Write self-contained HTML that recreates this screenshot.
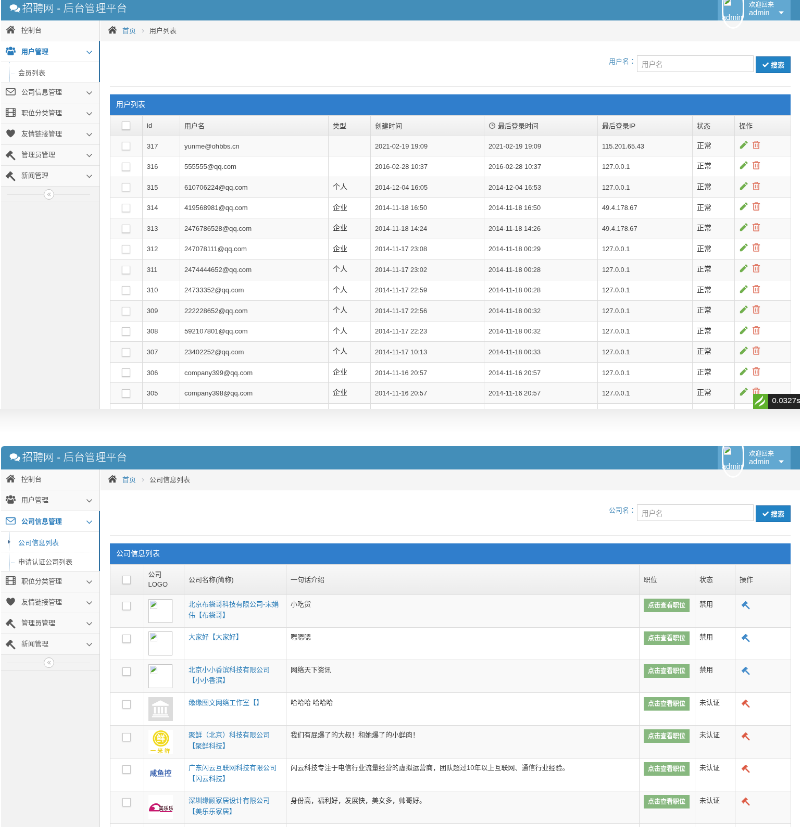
<!DOCTYPE html><html lang="zh-CN"><head><meta charset="utf-8"><title>招聘网 - 后台管理平台</title><style>*{box-sizing:border-box}
html,body{margin:0;padding:0}
body{width:800px;height:827px;overflow:hidden;background:#fff;position:relative;font-family:"Liberation Sans","Noto Sans CJK SC",sans-serif;color:#393939}
.screen{position:absolute;left:0;width:800px;overflow:hidden;background:#fff}
.app{position:absolute;left:1.2px;width:1534px;height:900px;transform:scale(.52083);transform-origin:0 0;background:#fff;font-size:13px;will-change:transform}
.ic{display:inline-block}
.navbar{height:45px;background:#438eb9;position:relative;color:#fff;z-index:5}
.brand{position:absolute;left:16px;top:0;line-height:44px;font-size:20.4px;font-weight:300;white-space:nowrap}
.user{position:absolute;left:1376px;top:0;width:140px;height:45px;background:#62a8d1}
.ava{position:absolute;left:8px;top:-20px;width:43px;height:81px;border:3px solid #fff;border-radius:50%/40%;display:block}
.ava .bimg{position:absolute;left:0;top:18px}
.ava .alt{position:absolute;left:-3px;top:47.5px;font-size:14.5px;color:#fff;line-height:16px;white-space:nowrap}
.bimg{display:block;width:16px;height:16px}
.uinfo{position:absolute;left:60px;top:7px;font-size:14.5px;line-height:15px;color:#fff}
.uinfo small{font-size:12px}
.sidebar{position:absolute;left:0;top:45px;width:190px;height:860px;background:#f2f2f2;border-right:1px solid #d6d6d6}
.nav,.sub{list-style:none;margin:0;padding:0}
.nav>li{border-bottom:1px solid #e5e5e5;background:#f9f9f9;position:relative}
.nav>li>a.it{display:block;height:39px;line-height:37.5px;padding-left:9px;overflow:hidden;color:#585858;font-size:13px;position:relative;white-space:nowrap}
.it .ic{vertical-align:-4px;margin-right:11px}
.arr{position:absolute;right:12px;top:1px;color:#666}
.arr .ic{margin:0;vertical-align:-3px}
.nav>li.open{background:#fff}
.nav>li.open>a.it{color:#2b7dbc;font-weight:bold;background:#fff;line-height:40px}.nav>li.open .arr{color:#2b7dbc}
.nav>li.open:after{content:"";position:absolute;right:-1px;top:0;bottom:0;border-right:2px solid #2b6ea0}
.sub{border-top:1px solid #e5e5e5;background:#fff;position:relative}
.sub:before{content:"";position:absolute;left:16px;top:0;bottom:0;border-left:1px dotted #b9d0e4}
.sub li a{display:block;height:36px;line-height:37px;padding-left:33px;overflow:hidden;color:#616161;font-size:13px;position:relative}
.sub li+li{border-top:1px dotted #d8d8d8}
.sub li a:before{content:"";position:absolute;left:20px;top:19px;width:7px;border-top:1px dotted #c5d9ea}
.sub li.cur a{color:#2b7dbc}
.sub li.cur a:before{border:0;top:16px;left:14px;border-left:5px solid #4a6f95;border-top:4px solid transparent;border-bottom:4px solid transparent;width:0}
.collapse{height:30px;background:#f3f3f3;border-bottom:1px solid #e0e0e0;text-align:center;position:relative}
.collapse:before{content:"";position:absolute;left:12px;right:18px;top:15px;border-top:1px solid #e0e0e0}
.cbtn{position:relative;left:-3px;display:inline-block;width:20px;height:20px;border:1px solid #bbb;border-radius:50%;background:#fff;margin-top:5px;line-height:18px}
.cbtn .ic{vertical-align:-2px}
.main{position:absolute;left:191px;top:45px;right:0}
.crumbs{height:40px;background:#f5f5f5;border-bottom:1px solid #e5e5e5;line-height:38px;padding-left:15px;font-size:13px;white-space:nowrap}
.crumbs .lk{color:#4c8fbd}
.crumbs .sep{color:#b2b6bf;margin:0 10px 0 11px;font-size:15px}
.crumbs .cur{color:#555}
.pc{position:absolute;left:18px;top:40px;width:1307px}
.search{height:85.5px;position:relative;font-size:13px}
.search .lb{position:absolute;right:297px;top:23px;line-height:32px;color:#4c8fbd;white-space:nowrap}.search .lb i{font-style:normal;font-family:"Liberation Sans","Noto Sans CJK JP",sans-serif}
.search .inp{position:absolute;right:71px;top:27px;width:224px;height:32px;border:1px solid #d5d5d5;line-height:33px;padding-left:8px;color:#999;font-size:13.5px}
.search .btn{position:absolute;right:0;top:29px;width:67px;font-weight:bold;height:32px;background:#2283c5;color:#fff;line-height:31px;text-align:center;font-size:13px;border:1px solid #1b6aaa}
.hr{border-top:1px solid #e3e3e3;margin-bottom:15.5px}
.thd{height:39.8px;line-height:39px;background:#307ecc;color:#fff;font-size:14px;padding-left:12px}
.tb{border-collapse:collapse;table-layout:fixed;width:1307px;font-size:13px;color:#393939}
.tb th,.tb td{border:1px solid #ddd;padding:0 8px;text-align:left;vertical-align:middle;overflow:hidden;white-space:nowrap}
.tb th{font-weight:normal;color:#484848;background:linear-gradient(#f8f8f8,#ececec);height:39px}
.tb thead tr{background:#f2f2f2}
.t1 td{height:39.55px;font-size:12.8px;color:#444}.zh{position:relative;top:-2.2px;font-size:14px;color:#333}
.tb tbody tr:nth-child(odd) td{background:#f9f9f9}
.tb .c{text-align:center;padding:0}
.cb{position:relative;top:0;left:-1px;display:inline-block;width:16px;height:16px;border:1px solid #c8c8c8;background:#fff;vertical-align:middle;box-shadow:0 1px 2px rgba(0,0,0,.18)}
.act .ic{vertical-align:middle;position:relative;top:-2.4px}
.t2 th{height:58px;line-height:19px}
.t2 td{height:62.8px;vertical-align:top;padding-top:8.5px;line-height:20.5px}
.t2 td.c{padding-top:11px}
.t2 td.nm{color:#2a7db8;white-space:normal;padding-right:0}
.lg{display:block;width:47px;height:46px;overflow:hidden;margin-top:-.8px}
.lg.brk{width:46px;border:1px solid #c6c6c6;border-right-color:#a8a8a8;border-bottom-color:#a8a8a8;background:#fff}
.lg.brk .bimg{margin:2px 1px}
.lg.bank{background:#dcdcdc;text-align:center;padding-top:4px}.lg.w{background:#fff}
.gbtn{display:inline-block;background:#87b87f;border:2px solid #87b87f;color:#fff;font-size:12px;font-weight:bold;line-height:22px;height:26px;padding:0 6px;margin-top:-1px}
.badge{position:absolute;left:752.5px;top:394.4px;width:48px;height:14.2px;background:#232323;overflow:hidden}
.badge .bl{position:absolute;left:0;top:0;width:15.5px;height:14.2px;background:#5fb02c;display:block}
.badge .bl svg{transform:scale(.52);transform-origin:0 0;display:block}
.badge .bt{position:absolute;left:19.3px;top:0;color:#fff;font-size:8px;line-height:14px;will-change:transform}

.fade{position:absolute;left:0;width:800px;height:24px;background:linear-gradient(rgba(0,0,0,.075),rgba(0,0,0,.03) 45%,rgba(0,0,0,0))}
.sub li:first-child a{height:37.8px;line-height:41.5px}
.sub li:first-child a:before{top:22px}
.sub li.cur:first-child a:before{top:14.5px;left:13px}
.t2 .act .ic{top:0;left:4px;margin-top:3px}
.s2{border-radius:4px 0 0 0}
.s2 .app{border-radius:6px 0 0 0;overflow:hidden}
.t1 td.em{font-size:13.1px}
</style></head><body><div class="screen s1" style="top:0px;height:408.6px"><div class="app" style="top:-3.5px"><div class="navbar"><div class="brand"><svg class="ic" width="21" height="21" viewBox="0 0 16 16" style="fill:#fff;vertical-align:-3px;margin-right:3.5px"><path d="M6.300 2C2.800 2 0 4 0 6.500c0 1.400.900 2.700 2.400 3.500-.200.800-.700 1.500-1.300 2.100 1.300-.100 2.600-.600 3.500-1.400.500.100 1.100.200 1.700.200 3.500 0 6.300-2 6.300-4.500S9.800 2 6.300 2zM13.700 7.300c-.300 2.600-3.200 4.700-7 4.800 1.100 1 2.700 1.600 4.500 1.600.600 0 1.200-.100 1.700-.200.900.800 2.200 1.300 3.500 1.400-.600-.600-1.100-1.300-1.300-2.100 1.500-.800 2.400-2 2.400-3.300 0-.900-.700-1.700-1.800-2.200z" transform="scale(0.900) translate(0.500,0.800)"/></svg>招聘网 - 后台管理平台</div><div class="user"><span class="ava"><svg class="bimg" width="16" height="16" viewBox="0 0 16 16"><path d="M1.500.500h9l4 4v11h-13z" fill="#fff" stroke="#cfcfcf"/><path d="M2.500 1.500h7.500l3.500 3.500v4h-11z" fill="#c3d2f3"/><path d="M2.500 12.500c1-4 5-7 10-7.500-1 4-5 7.500-10 7.500z" fill="#54a32c"/><path d="M10.500.500v4h4" fill="#e8e8e8" stroke="#cfcfcf"/></svg><span class="alt">admin</span></span><span class="uinfo"><small>欢迎回来</small><br>admin</span><svg class="ic" width="16" height="16" viewBox="0 0 16 16" style="fill:#fff;position:absolute;right:10px;top:22px"><path d="M3 5.500h10L8 11z"/></svg></div></div><div class="sidebar"><ul class="nav"><li class=""><a class="it"><svg class="ic" width="19" height="19" viewBox="0 0 16 16" style="fill:currentColor;"><path d="M8 1.6 0.6 8.2l1 1.1L8 3.8l6.4 5.5 1-1.1L12.8 5.8V2.4h-1.9v1.7zM8 5 2.7 9.5V14.4h3.9v-3.6h2.8v3.6h3.9V9.5z"/></svg><span class="t">控制台</span></a></li><li class="open"><a class="it"><svg class="ic" width="19" height="19" viewBox="0 0 16 16" style="fill:currentColor;"><path d="M8 1.300a2.700 2.700 0 1 0 0 5.400 2.700 2.700 0 0 0 0-5.400zM2.900 2.600a2.100 2.100 0 1 0 0 4.200 2.100 2.100 0 0 0 0-4.200zM13.100 2.600a2.100 2.100 0 1 0 0 4.200 2.100 2.100 0 0 0 0-4.200zM4.700 15c-1.200 0-1.900-.700-1.900-1.900 0-2.900.600-5.600 2.500-5.600.500.500 1.500 1.100 2.700 1.100s2.200-.600 2.700-1.100c1.900 0 2.500 2.700 2.500 5.600 0 1.200-.700 1.900-1.900 1.900zM0 9.800c0-1.700.300-3.100 1.400-3.100.500.400 1.200.700 1.900.700-.700.900-1 2-1.100 3.300H1C.4 10.700 0 10.400 0 9.800zM16 9.800c0-1.700-.300-3.100-1.400-3.100-.500.400-1.200.700-1.900.700.700.900 1 2 1.100 3.300H15c.600 0 1-.300 1-.900z"/></svg><span class="t">用户管理</span><b class="arr"><svg class="ic" width="15" height="15" viewBox="0 0 16 16" style="fill:currentColor;"><path d="M3.200 5.400l4.800 4.800 4.800-4.800 1 1L8 12.200 2.200 6.400z"/></svg></b></a><ul class="sub"><li><a>会员列表</a></li></ul></li><li class=""><a class="it"><svg class="ic" width="19" height="19" viewBox="0 0 16 16" style="fill:currentColor;"><path d="M1.5 2.500h13c.800 0 1.500.700 1.500 1.500v8.500c0 .800-.700 1.500-1.500 1.500h-13C.7 14 0 13.300 0 12.500V4c0-.800.700-1.500 1.500-1.500zM1.200 5.300v7.200c0 .200.100.300.300.300h13c.200 0 .300-.100.300-.300V5.300L9.200 9.900c-.700.600-1.700.600-2.400 0zM1.200 3.900l6.400 5.100c.200.200.600.200.800 0l6.400-5.100c0-.100-.100-.200-.300-.200h-13c-.200 0-.300.100-.300.200z"/></svg><span class="t">公司信息管理</span><b class="arr"><svg class="ic" width="15" height="15" viewBox="0 0 16 16" style="fill:currentColor;"><path d="M3.200 5.400l4.800 4.800 4.800-4.800 1 1L8 12.200 2.200 6.400z"/></svg></b></a></li><li class=""><a class="it"><svg class="ic" width="19" height="19" viewBox="0 0 16 16" style="fill:currentColor;"><path fill-rule="evenodd" d="M1.400.800h13.200c.800 0 1.400.600 1.400 1.400v11.600c0 .800-.600 1.400-1.400 1.400H1.400C.600 15.200 0 14.600 0 13.800V2.200C0 1.400.600.800 1.400.800zM1.200 2.100v2h1.900v-2zM1.200 5.400v2h1.900v-2zM1.200 8.700v2h1.900v-2zM1.200 12v1.900h1.900V12zM12.900 2.100v2h1.900v-2zM12.900 5.400v2h1.900v-2zM12.900 8.700v2h1.900v-2zM12.900 12v1.900h1.900V12zM4.500 2.100v5.200h7V2.100zM4.500 8.700v5.200h7V8.700z"/></svg><span class="t">职位分类管理</span><b class="arr"><svg class="ic" width="15" height="15" viewBox="0 0 16 16" style="fill:currentColor;"><path d="M3.200 5.400l4.800 4.800 4.800-4.800 1 1L8 12.200 2.200 6.400z"/></svg></b></a></li><li class=""><a class="it"><svg class="ic" width="19" height="19" viewBox="0 0 16 16" style="fill:currentColor;"><path d="M8 14.600C7.700 14.600 1 10.100 1 5.800 1 3.500 2.600 2 4.600 2 6.100 2 7.300 2.900 8 4c.700-1.100 1.900-2 3.400-2C13.400 2 15 3.500 15 5.800c0 4.300-6.700 8.800-7 8.800z"/></svg><span class="t">友情链接管理</span><b class="arr"><svg class="ic" width="15" height="15" viewBox="0 0 16 16" style="fill:currentColor;"><path d="M3.200 5.400l4.800 4.800 4.800-4.800 1 1L8 12.200 2.200 6.400z"/></svg></b></a></li><li class=""><a class="it"><svg class="ic" width="19" height="19" viewBox="0 0 16 16" style="fill:currentColor;position:relative;top:3px"><g transform="translate(5.600 5.400) rotate(45)"><rect x="-2.600" y="-4.300" width="5.200" height="8.600"/><rect x="-3.300" y="-5.700" width="6.600" height="1.700" rx=".5"/><rect x="-3.300" y="4" width="6.600" height="1.700" rx=".5"/><rect x="2.600" y="-1.300" width="10.800" height="2.600" rx="1"/></g></svg><span class="t">管理员管理</span><b class="arr"><svg class="ic" width="15" height="15" viewBox="0 0 16 16" style="fill:currentColor;"><path d="M3.200 5.400l4.800 4.800 4.800-4.800 1 1L8 12.200 2.200 6.400z"/></svg></b></a></li><li class=""><a class="it"><svg class="ic" width="19" height="19" viewBox="0 0 16 16" style="fill:currentColor;position:relative;top:3px"><g transform="translate(5.600 5.400) rotate(45)"><rect x="-2.600" y="-4.300" width="5.200" height="8.600"/><rect x="-3.300" y="-5.700" width="6.600" height="1.700" rx=".5"/><rect x="-3.300" y="4" width="6.600" height="1.700" rx=".5"/><rect x="2.600" y="-1.300" width="10.800" height="2.600" rx="1"/></g></svg><span class="t">新闻管理</span><b class="arr"><svg class="ic" width="15" height="15" viewBox="0 0 16 16" style="fill:currentColor;"><path d="M3.200 5.400l4.800 4.800 4.800-4.800 1 1L8 12.200 2.200 6.400z"/></svg></b></a></li></ul><div class="collapse"><span class="cbtn"><svg class="ic" width="12" height="12" viewBox="0 0 16 16" style="fill:#aaa;"><path d="M8.200 3.200 3.600 8l4.600 4.800.900-.900L5.400 8l3.700-3.900zM12.200 3.200 7.600 8l4.600 4.800.900-.900L9.400 8l3.700-3.900z"/></svg></span></div></div><div class="main"><div class="crumbs"><svg class="ic" width="18" height="18" viewBox="0 0 16 16" style="fill:#4a4a4a;vertical-align:-3px;margin-right:10px;margin-left:-1px"><path d="M8 1.6 0.6 8.2l1 1.1L8 3.8l6.4 5.5 1-1.1L12.8 5.8V2.4h-1.9v1.7zM8 5 2.7 9.5V14.4h3.9v-3.6h2.8v3.6h3.9V9.5z"/></svg><span class="lk">首页</span><span class="sep">›</span><span class="cur">用户列表</span></div><div class="pc"><div class="search"><span class="lb">用户名<i lang="ja">：</i></span><span class="inp">用户名</span><span class="btn"><svg class="ic" width="14" height="14" viewBox="0 0 16 16" style="fill:#fff;vertical-align:-2px;margin-right:3px"><path d="M6.200 13.600.9 8.300l2-2 3.300 3.300 6.900-6.900 2 2z"/></svg>搜索</span></div><div class="hr"></div><div class="thd">用户列表</div><table class="tb t1"><colgroup><col style="width:62px"><col style="width:72px"><col style="width:285px"><col style="width:81px"><col style="width:218px"><col style="width:218px"><col style="width:182px"><col style="width:81px"><col style="width:108px"></colgroup><thead><tr><th class="c"><span class="cb"></span></th><th>id</th><th>用户名</th><th>类型</th><th>创建时间</th><th><svg class="ic" width="14" height="14" viewBox="0 0 16 16" style="fill:#707070;vertical-align:-2px;margin-right:4px"><path fill-rule="evenodd" d="M8 1a7 7 0 1 0 0 14A7 7 0 0 0 8 1zm0 1.700a5.300 5.300 0 1 1 0 10.600A5.300 5.300 0 0 1 8 2.700zM7.200 4.200h1.500v3.500h2.600v1.500H7.200z"/></svg>最后登录时间</th><th>最后登录IP</th><th>状态</th><th>操作</th></tr></thead><tbody><tr><td class="c"><span class="cb"></span></td><td>317</td><td class="em">yunme@ohbbs.cn</td><td><span class="zh"></span></td><td>2021-02-19 19:09</td><td>2021-02-19 19:09</td><td>115.201.65.43</td><td><span class="zh">正常</span></td><td class="act"><svg class="ic" width="18" height="18" viewBox="0 0 16 16" style="fill:#72b04e;"><path d="M11.800.9l3.300 3.300-1.900 1.900-3.300-3.300zM9 3.700l3.300 3.300-7.400 7.400H1.600v-3.300z"/></svg><svg class="ic" width="18" height="18" viewBox="0 0 16 16" style="fill:#e27d6a;margin-left:6px"><path fill-rule="evenodd" d="M5.600 1h4.800l.800 1.700h3.100v1.500h-1.100v9.400c0 .800-.600 1.400-1.400 1.400H4.200c-.800 0-1.400-.600-1.400-1.400V4.200H1.700V2.700h3.100zM6.400 2.200l-.300.500h3.800l-.300-.500zM4.300 4.200v9.100c0 .100.100.200.200.200h7c.100 0 .200-.100.200-.200V4.200zM5.800 6h1.300v5.800H5.800zM8.900 6h1.300v5.800H8.900z"/></svg></td></tr><tr><td class="c"><span class="cb"></span></td><td>316</td><td class="em">555555@qq.com</td><td><span class="zh"></span></td><td>2016-02-28 10:37</td><td>2016-02-28 10:37</td><td>127.0.0.1</td><td><span class="zh">正常</span></td><td class="act"><svg class="ic" width="18" height="18" viewBox="0 0 16 16" style="fill:#72b04e;"><path d="M11.800.9l3.300 3.300-1.900 1.900-3.300-3.300zM9 3.700l3.300 3.300-7.400 7.400H1.600v-3.300z"/></svg><svg class="ic" width="18" height="18" viewBox="0 0 16 16" style="fill:#e27d6a;margin-left:6px"><path fill-rule="evenodd" d="M5.600 1h4.800l.800 1.700h3.100v1.500h-1.100v9.400c0 .800-.600 1.400-1.400 1.400H4.200c-.800 0-1.400-.600-1.400-1.400V4.200H1.700V2.700h3.100zM6.400 2.200l-.300.500h3.800l-.300-.500zM4.300 4.200v9.100c0 .100.100.200.200.200h7c.100 0 .200-.100.200-.200V4.200zM5.800 6h1.300v5.800H5.800zM8.900 6h1.300v5.800H8.900z"/></svg></td></tr><tr><td class="c"><span class="cb"></span></td><td>315</td><td class="em">610706224@qq.com</td><td><span class="zh">个人</span></td><td>2014-12-04 16:05</td><td>2014-12-04 16:53</td><td>127.0.0.1</td><td><span class="zh">正常</span></td><td class="act"><svg class="ic" width="18" height="18" viewBox="0 0 16 16" style="fill:#72b04e;"><path d="M11.800.9l3.300 3.300-1.900 1.900-3.300-3.300zM9 3.700l3.300 3.300-7.400 7.400H1.600v-3.300z"/></svg><svg class="ic" width="18" height="18" viewBox="0 0 16 16" style="fill:#e27d6a;margin-left:6px"><path fill-rule="evenodd" d="M5.600 1h4.800l.800 1.700h3.100v1.500h-1.100v9.400c0 .800-.600 1.400-1.400 1.400H4.200c-.800 0-1.400-.600-1.400-1.400V4.200H1.700V2.700h3.100zM6.400 2.200l-.300.500h3.800l-.300-.500zM4.300 4.200v9.100c0 .100.100.200.200.200h7c.100 0 .200-.100.200-.200V4.200zM5.800 6h1.300v5.800H5.800zM8.900 6h1.300v5.800H8.900z"/></svg></td></tr><tr><td class="c"><span class="cb"></span></td><td>314</td><td class="em">419568981@qq.com</td><td><span class="zh">企业</span></td><td>2014-11-18 16:50</td><td>2014-11-18 16:50</td><td>49.4.178.67</td><td><span class="zh">正常</span></td><td class="act"><svg class="ic" width="18" height="18" viewBox="0 0 16 16" style="fill:#72b04e;"><path d="M11.800.9l3.300 3.300-1.900 1.900-3.300-3.300zM9 3.700l3.300 3.300-7.400 7.400H1.600v-3.300z"/></svg><svg class="ic" width="18" height="18" viewBox="0 0 16 16" style="fill:#e27d6a;margin-left:6px"><path fill-rule="evenodd" d="M5.600 1h4.800l.800 1.700h3.100v1.500h-1.100v9.400c0 .800-.600 1.400-1.400 1.400H4.200c-.800 0-1.400-.600-1.400-1.400V4.200H1.700V2.700h3.100zM6.400 2.200l-.300.500h3.800l-.300-.500zM4.300 4.200v9.100c0 .100.100.200.200.200h7c.100 0 .200-.100.200-.200V4.200zM5.800 6h1.300v5.800H5.800zM8.900 6h1.300v5.800H8.900z"/></svg></td></tr><tr><td class="c"><span class="cb"></span></td><td>313</td><td class="em">2476786528@qq.com</td><td><span class="zh">企业</span></td><td>2014-11-18 14:24</td><td>2014-11-18 14:26</td><td>49.4.178.67</td><td><span class="zh">正常</span></td><td class="act"><svg class="ic" width="18" height="18" viewBox="0 0 16 16" style="fill:#72b04e;"><path d="M11.800.9l3.300 3.300-1.900 1.900-3.300-3.300zM9 3.700l3.300 3.300-7.400 7.400H1.600v-3.300z"/></svg><svg class="ic" width="18" height="18" viewBox="0 0 16 16" style="fill:#e27d6a;margin-left:6px"><path fill-rule="evenodd" d="M5.600 1h4.800l.800 1.700h3.100v1.500h-1.100v9.400c0 .800-.600 1.400-1.400 1.400H4.200c-.800 0-1.400-.600-1.400-1.400V4.200H1.700V2.700h3.100zM6.400 2.200l-.300.500h3.800l-.300-.500zM4.300 4.200v9.100c0 .100.100.200.200.200h7c.100 0 .200-.100.200-.200V4.200zM5.800 6h1.300v5.800H5.800zM8.900 6h1.300v5.800H8.900z"/></svg></td></tr><tr><td class="c"><span class="cb"></span></td><td>312</td><td class="em">247078111@qq.com</td><td><span class="zh">企业</span></td><td>2014-11-17 23:08</td><td>2014-11-18 00:29</td><td>127.0.0.1</td><td><span class="zh">正常</span></td><td class="act"><svg class="ic" width="18" height="18" viewBox="0 0 16 16" style="fill:#72b04e;"><path d="M11.800.9l3.300 3.300-1.900 1.900-3.300-3.300zM9 3.700l3.300 3.300-7.400 7.400H1.600v-3.300z"/></svg><svg class="ic" width="18" height="18" viewBox="0 0 16 16" style="fill:#e27d6a;margin-left:6px"><path fill-rule="evenodd" d="M5.600 1h4.800l.800 1.700h3.100v1.500h-1.100v9.400c0 .800-.600 1.400-1.400 1.400H4.200c-.800 0-1.400-.600-1.400-1.400V4.200H1.700V2.700h3.100zM6.400 2.200l-.300.500h3.800l-.300-.500zM4.300 4.200v9.100c0 .100.100.200.200.200h7c.100 0 .200-.100.200-.200V4.200zM5.800 6h1.300v5.800H5.800zM8.900 6h1.300v5.800H8.900z"/></svg></td></tr><tr><td class="c"><span class="cb"></span></td><td>311</td><td class="em">2474444652@qq.com</td><td><span class="zh">个人</span></td><td>2014-11-17 23:02</td><td>2014-11-18 00:28</td><td>127.0.0.1</td><td><span class="zh">正常</span></td><td class="act"><svg class="ic" width="18" height="18" viewBox="0 0 16 16" style="fill:#72b04e;"><path d="M11.800.9l3.300 3.300-1.900 1.900-3.300-3.300zM9 3.700l3.300 3.300-7.400 7.400H1.600v-3.300z"/></svg><svg class="ic" width="18" height="18" viewBox="0 0 16 16" style="fill:#e27d6a;margin-left:6px"><path fill-rule="evenodd" d="M5.600 1h4.800l.800 1.700h3.100v1.500h-1.100v9.400c0 .800-.600 1.400-1.400 1.400H4.200c-.800 0-1.400-.600-1.400-1.400V4.200H1.700V2.700h3.100zM6.400 2.200l-.300.500h3.800l-.300-.500zM4.300 4.200v9.100c0 .100.100.200.200.200h7c.100 0 .200-.100.200-.200V4.200zM5.800 6h1.300v5.800H5.800zM8.900 6h1.300v5.800H8.900z"/></svg></td></tr><tr><td class="c"><span class="cb"></span></td><td>310</td><td class="em">24733352@qq.com</td><td><span class="zh">个人</span></td><td>2014-11-17 22:59</td><td>2014-11-18 00:28</td><td>127.0.0.1</td><td><span class="zh">正常</span></td><td class="act"><svg class="ic" width="18" height="18" viewBox="0 0 16 16" style="fill:#72b04e;"><path d="M11.800.9l3.300 3.300-1.900 1.900-3.300-3.300zM9 3.700l3.300 3.300-7.400 7.400H1.600v-3.300z"/></svg><svg class="ic" width="18" height="18" viewBox="0 0 16 16" style="fill:#e27d6a;margin-left:6px"><path fill-rule="evenodd" d="M5.600 1h4.800l.800 1.700h3.100v1.500h-1.100v9.400c0 .800-.600 1.400-1.400 1.400H4.200c-.800 0-1.400-.600-1.400-1.400V4.200H1.700V2.700h3.100zM6.400 2.200l-.300.500h3.800l-.300-.500zM4.300 4.200v9.100c0 .100.100.200.200.200h7c.100 0 .200-.100.200-.200V4.200zM5.800 6h1.300v5.800H5.800zM8.900 6h1.300v5.800H8.900z"/></svg></td></tr><tr><td class="c"><span class="cb"></span></td><td>309</td><td class="em">222228652@qq.com</td><td><span class="zh">个人</span></td><td>2014-11-17 22:56</td><td>2014-11-18 00:32</td><td>127.0.0.1</td><td><span class="zh">正常</span></td><td class="act"><svg class="ic" width="18" height="18" viewBox="0 0 16 16" style="fill:#72b04e;"><path d="M11.800.9l3.300 3.300-1.900 1.900-3.300-3.300zM9 3.700l3.300 3.300-7.400 7.400H1.600v-3.300z"/></svg><svg class="ic" width="18" height="18" viewBox="0 0 16 16" style="fill:#e27d6a;margin-left:6px"><path fill-rule="evenodd" d="M5.600 1h4.800l.800 1.700h3.100v1.500h-1.100v9.400c0 .800-.600 1.400-1.400 1.400H4.200c-.800 0-1.400-.600-1.400-1.400V4.200H1.700V2.700h3.100zM6.400 2.200l-.300.500h3.800l-.300-.500zM4.300 4.200v9.100c0 .100.100.200.200.200h7c.100 0 .200-.100.200-.200V4.200zM5.800 6h1.300v5.800H5.800zM8.900 6h1.300v5.800H8.900z"/></svg></td></tr><tr><td class="c"><span class="cb"></span></td><td>308</td><td class="em">592107801@qq.com</td><td><span class="zh">个人</span></td><td>2014-11-17 22:23</td><td>2014-11-18 00:32</td><td>127.0.0.1</td><td><span class="zh">正常</span></td><td class="act"><svg class="ic" width="18" height="18" viewBox="0 0 16 16" style="fill:#72b04e;"><path d="M11.800.9l3.300 3.300-1.900 1.900-3.300-3.300zM9 3.700l3.300 3.300-7.400 7.400H1.600v-3.300z"/></svg><svg class="ic" width="18" height="18" viewBox="0 0 16 16" style="fill:#e27d6a;margin-left:6px"><path fill-rule="evenodd" d="M5.600 1h4.800l.800 1.700h3.100v1.500h-1.100v9.400c0 .800-.600 1.400-1.400 1.400H4.200c-.800 0-1.400-.600-1.400-1.400V4.200H1.700V2.700h3.100zM6.400 2.200l-.300.500h3.800l-.300-.500zM4.300 4.200v9.100c0 .100.100.200.200.200h7c.100 0 .200-.100.200-.200V4.200zM5.800 6h1.300v5.800H5.800zM8.900 6h1.300v5.800H8.900z"/></svg></td></tr><tr><td class="c"><span class="cb"></span></td><td>307</td><td class="em">23402252@qq.com</td><td><span class="zh">个人</span></td><td>2014-11-17 10:13</td><td>2014-11-18 00:33</td><td>127.0.0.1</td><td><span class="zh">正常</span></td><td class="act"><svg class="ic" width="18" height="18" viewBox="0 0 16 16" style="fill:#72b04e;"><path d="M11.800.9l3.300 3.300-1.900 1.900-3.300-3.300zM9 3.700l3.300 3.300-7.400 7.400H1.600v-3.300z"/></svg><svg class="ic" width="18" height="18" viewBox="0 0 16 16" style="fill:#e27d6a;margin-left:6px"><path fill-rule="evenodd" d="M5.600 1h4.800l.800 1.700h3.100v1.500h-1.100v9.400c0 .800-.600 1.400-1.400 1.400H4.200c-.800 0-1.400-.600-1.400-1.400V4.200H1.700V2.700h3.100zM6.400 2.200l-.300.500h3.800l-.300-.500zM4.300 4.200v9.100c0 .100.100.200.200.200h7c.100 0 .200-.100.200-.200V4.200zM5.800 6h1.300v5.800H5.800zM8.900 6h1.300v5.800H8.900z"/></svg></td></tr><tr><td class="c"><span class="cb"></span></td><td>306</td><td class="em">company399@qq.com</td><td><span class="zh">企业</span></td><td>2014-11-16 20:57</td><td>2014-11-16 20:57</td><td>127.0.0.1</td><td><span class="zh">正常</span></td><td class="act"><svg class="ic" width="18" height="18" viewBox="0 0 16 16" style="fill:#72b04e;"><path d="M11.800.9l3.300 3.300-1.900 1.900-3.300-3.300zM9 3.700l3.300 3.300-7.400 7.400H1.600v-3.300z"/></svg><svg class="ic" width="18" height="18" viewBox="0 0 16 16" style="fill:#e27d6a;margin-left:6px"><path fill-rule="evenodd" d="M5.600 1h4.800l.800 1.700h3.100v1.500h-1.100v9.400c0 .800-.600 1.400-1.400 1.400H4.200c-.800 0-1.400-.600-1.400-1.400V4.200H1.700V2.700h3.100zM6.400 2.200l-.300.500h3.800l-.300-.500zM4.300 4.200v9.100c0 .100.100.200.200.200h7c.100 0 .200-.100.200-.200V4.200zM5.800 6h1.300v5.800H5.800zM8.900 6h1.300v5.800H8.900z"/></svg></td></tr><tr><td class="c"><span class="cb"></span></td><td>305</td><td class="em">company398@qq.com</td><td><span class="zh">企业</span></td><td>2014-11-16 20:57</td><td>2014-11-16 20:57</td><td>127.0.0.1</td><td><span class="zh">正常</span></td><td class="act"><svg class="ic" width="18" height="18" viewBox="0 0 16 16" style="fill:#72b04e;"><path d="M11.800.9l3.300 3.300-1.900 1.900-3.300-3.300zM9 3.700l3.300 3.300-7.400 7.400H1.600v-3.300z"/></svg><svg class="ic" width="18" height="18" viewBox="0 0 16 16" style="fill:#e27d6a;margin-left:6px"><path fill-rule="evenodd" d="M5.600 1h4.800l.800 1.700h3.100v1.500h-1.100v9.400c0 .800-.600 1.400-1.400 1.400H4.200c-.800 0-1.400-.600-1.400-1.400V4.200H1.700V2.700h3.100zM6.400 2.200l-.300.500h3.800l-.300-.500zM4.300 4.200v9.100c0 .100.100.200.200.200h7c.100 0 .200-.100.200-.200V4.200zM5.800 6h1.300v5.800H5.800zM8.900 6h1.300v5.800H8.900z"/></svg></td></tr><tr><td></td><td></td><td></td><td></td><td></td><td></td><td></td><td></td><td></td></tr></tbody></table></div></div></div><div class="badge"><span class="bl"><svg width="30" height="27" viewBox="0 0 30 27"><path d="M3 22C5 13 14 12 19 3c1 6-3 10-8 13-4 2-6 4-8 6zM11 24c2-6 9-7 12-14 1 5-2 9-6 11-3 1-4 2-6 3z" fill="#fff"/></svg></span><span class="bt">0.0327s</span></div></div><div class="fade" style="top:408.8px"></div><div class="screen s2" style="top:446.4px;height:380.6px"><div class="app" style="top:0px"><div class="navbar"><div class="brand"><svg class="ic" width="21" height="21" viewBox="0 0 16 16" style="fill:#fff;vertical-align:-3px;margin-right:3.5px"><path d="M6.300 2C2.800 2 0 4 0 6.500c0 1.400.900 2.700 2.400 3.500-.200.800-.700 1.500-1.300 2.100 1.300-.100 2.600-.600 3.500-1.400.500.100 1.100.200 1.700.200 3.500 0 6.300-2 6.300-4.500S9.800 2 6.300 2zM13.700 7.300c-.300 2.600-3.200 4.700-7 4.800 1.100 1 2.700 1.600 4.500 1.600.600 0 1.200-.100 1.700-.200.900.800 2.200 1.300 3.500 1.400-.600-.600-1.100-1.300-1.300-2.100 1.500-.800 2.400-2 2.400-3.300 0-.900-.700-1.700-1.800-2.200z" transform="scale(0.900) translate(0.500,0.800)"/></svg>招聘网 - 后台管理平台</div><div class="user"><span class="ava"><svg class="bimg" width="16" height="16" viewBox="0 0 16 16"><path d="M1.500.500h9l4 4v11h-13z" fill="#fff" stroke="#cfcfcf"/><path d="M2.500 1.500h7.500l3.500 3.500v4h-11z" fill="#c3d2f3"/><path d="M2.500 12.500c1-4 5-7 10-7.500-1 4-5 7.500-10 7.500z" fill="#54a32c"/><path d="M10.500.500v4h4" fill="#e8e8e8" stroke="#cfcfcf"/></svg><span class="alt">admin</span></span><span class="uinfo"><small>欢迎回来</small><br>admin</span><svg class="ic" width="16" height="16" viewBox="0 0 16 16" style="fill:#fff;position:absolute;right:10px;top:22px"><path d="M3 5.500h10L8 11z"/></svg></div></div><div class="sidebar"><ul class="nav"><li class=""><a class="it"><svg class="ic" width="19" height="19" viewBox="0 0 16 16" style="fill:currentColor;"><path d="M8 1.6 0.6 8.2l1 1.1L8 3.8l6.4 5.5 1-1.1L12.8 5.8V2.4h-1.9v1.7zM8 5 2.7 9.5V14.4h3.9v-3.6h2.8v3.6h3.9V9.5z"/></svg><span class="t">控制台</span></a></li><li class=""><a class="it"><svg class="ic" width="19" height="19" viewBox="0 0 16 16" style="fill:currentColor;"><path d="M8 1.300a2.700 2.700 0 1 0 0 5.400 2.700 2.700 0 0 0 0-5.400zM2.900 2.600a2.100 2.100 0 1 0 0 4.200 2.100 2.100 0 0 0 0-4.200zM13.100 2.600a2.100 2.100 0 1 0 0 4.200 2.100 2.100 0 0 0 0-4.200zM4.700 15c-1.200 0-1.900-.700-1.900-1.900 0-2.900.600-5.600 2.500-5.600.500.500 1.500 1.100 2.700 1.100s2.200-.600 2.700-1.100c1.900 0 2.500 2.700 2.500 5.600 0 1.200-.700 1.900-1.900 1.900zM0 9.800c0-1.700.300-3.100 1.400-3.100.500.400 1.200.700 1.900.700-.700.900-1 2-1.100 3.300H1C.4 10.700 0 10.400 0 9.800zM16 9.800c0-1.700-.300-3.100-1.400-3.100-.500.400-1.200.700-1.900.700.700.900 1 2 1.100 3.300H15c.600 0 1-.300 1-.900z"/></svg><span class="t">用户管理</span><b class="arr"><svg class="ic" width="15" height="15" viewBox="0 0 16 16" style="fill:currentColor;"><path d="M3.200 5.400l4.800 4.800 4.800-4.800 1 1L8 12.200 2.200 6.400z"/></svg></b></a></li><li class="open"><a class="it"><svg class="ic" width="19" height="19" viewBox="0 0 16 16" style="fill:currentColor;"><path d="M1.5 2.500h13c.800 0 1.500.700 1.500 1.500v8.500c0 .800-.700 1.500-1.500 1.500h-13C.7 14 0 13.300 0 12.500V4c0-.800.700-1.500 1.500-1.500zM1.200 5.300v7.200c0 .200.100.300.300.300h13c.200 0 .300-.100.300-.300V5.300L9.200 9.900c-.700.600-1.700.600-2.400 0zM1.200 3.900l6.400 5.100c.200.200.600.200.800 0l6.400-5.100c0-.100-.100-.200-.300-.200h-13c-.200 0-.300.100-.300.200z"/></svg><span class="t">公司信息管理</span><b class="arr"><svg class="ic" width="15" height="15" viewBox="0 0 16 16" style="fill:currentColor;"><path d="M3.200 5.400l4.800 4.800 4.800-4.800 1 1L8 12.200 2.200 6.400z"/></svg></b></a><ul class="sub"><li class="cur"><a>公司信息列表</a></li><li><a>申请认证公司列表</a></li></ul></li><li class=""><a class="it"><svg class="ic" width="19" height="19" viewBox="0 0 16 16" style="fill:currentColor;"><path fill-rule="evenodd" d="M1.400.800h13.200c.800 0 1.400.600 1.400 1.400v11.600c0 .800-.600 1.400-1.400 1.400H1.400C.600 15.200 0 14.600 0 13.800V2.200C0 1.400.600.800 1.400.800zM1.200 2.100v2h1.900v-2zM1.200 5.400v2h1.900v-2zM1.200 8.700v2h1.900v-2zM1.200 12v1.900h1.900V12zM12.900 2.100v2h1.900v-2zM12.900 5.400v2h1.900v-2zM12.900 8.700v2h1.900v-2zM12.900 12v1.900h1.900V12zM4.500 2.100v5.200h7V2.100zM4.500 8.700v5.200h7V8.700z"/></svg><span class="t">职位分类管理</span><b class="arr"><svg class="ic" width="15" height="15" viewBox="0 0 16 16" style="fill:currentColor;"><path d="M3.200 5.400l4.800 4.800 4.800-4.800 1 1L8 12.200 2.200 6.400z"/></svg></b></a></li><li class=""><a class="it"><svg class="ic" width="19" height="19" viewBox="0 0 16 16" style="fill:currentColor;"><path d="M8 14.600C7.700 14.600 1 10.100 1 5.800 1 3.500 2.600 2 4.600 2 6.100 2 7.300 2.900 8 4c.700-1.100 1.900-2 3.400-2C13.400 2 15 3.500 15 5.800c0 4.300-6.700 8.800-7 8.800z"/></svg><span class="t">友情链接管理</span><b class="arr"><svg class="ic" width="15" height="15" viewBox="0 0 16 16" style="fill:currentColor;"><path d="M3.200 5.400l4.800 4.800 4.800-4.800 1 1L8 12.200 2.200 6.400z"/></svg></b></a></li><li class=""><a class="it"><svg class="ic" width="19" height="19" viewBox="0 0 16 16" style="fill:currentColor;position:relative;top:3px"><g transform="translate(5.600 5.400) rotate(45)"><rect x="-2.600" y="-4.300" width="5.200" height="8.600"/><rect x="-3.300" y="-5.700" width="6.600" height="1.700" rx=".5"/><rect x="-3.300" y="4" width="6.600" height="1.700" rx=".5"/><rect x="2.600" y="-1.300" width="10.800" height="2.600" rx="1"/></g></svg><span class="t">管理员管理</span><b class="arr"><svg class="ic" width="15" height="15" viewBox="0 0 16 16" style="fill:currentColor;"><path d="M3.200 5.400l4.800 4.800 4.800-4.800 1 1L8 12.200 2.200 6.400z"/></svg></b></a></li><li class=""><a class="it"><svg class="ic" width="19" height="19" viewBox="0 0 16 16" style="fill:currentColor;position:relative;top:3px"><g transform="translate(5.600 5.400) rotate(45)"><rect x="-2.600" y="-4.300" width="5.200" height="8.600"/><rect x="-3.300" y="-5.700" width="6.600" height="1.700" rx=".5"/><rect x="-3.300" y="4" width="6.600" height="1.700" rx=".5"/><rect x="2.600" y="-1.300" width="10.800" height="2.600" rx="1"/></g></svg><span class="t">新闻管理</span><b class="arr"><svg class="ic" width="15" height="15" viewBox="0 0 16 16" style="fill:currentColor;"><path d="M3.200 5.400l4.800 4.800 4.800-4.800 1 1L8 12.200 2.200 6.400z"/></svg></b></a></li></ul><div class="collapse"><span class="cbtn"><svg class="ic" width="12" height="12" viewBox="0 0 16 16" style="fill:#aaa;"><path d="M8.200 3.200 3.600 8l4.600 4.800.900-.900L5.400 8l3.700-3.900zM12.200 3.200 7.600 8l4.600 4.800.900-.900L9.400 8l3.700-3.900z"/></svg></span></div></div><div class="main"><div class="crumbs"><svg class="ic" width="18" height="18" viewBox="0 0 16 16" style="fill:#4a4a4a;vertical-align:-3px;margin-right:10px;margin-left:-1px"><path d="M8 1.6 0.6 8.2l1 1.1L8 3.8l6.4 5.5 1-1.1L12.8 5.8V2.4h-1.9v1.7zM8 5 2.7 9.5V14.4h3.9v-3.6h2.8v3.6h3.9V9.5z"/></svg><span class="lk">首页</span><span class="sep">›</span><span class="cur">公司信息列表</span></div><div class="pc"><div class="search"><span class="lb">公司名<i lang="ja">：</i></span><span class="inp">用户名</span><span class="btn"><svg class="ic" width="14" height="14" viewBox="0 0 16 16" style="fill:#fff;vertical-align:-2px;margin-right:3px"><path d="M6.200 13.600.9 8.300l2-2 3.300 3.300 6.900-6.900 2 2z"/></svg>搜索</span></div><div class="hr"></div><div class="thd">公司信息列表</div><table class="tb t2"><colgroup><col style="width:64.5px"><col style="width:77.5px"><col style="width:196px"><col style="width:678px"><col style="width:107px"><col style="width:77px"><col style="width:107px"></colgroup><thead><tr><th class="c"><span class="cb"></span></th><th>公司<br>LOGO</th><th>公司名称(简称)</th><th>一句话介绍</th><th>职位</th><th>状态</th><th>操作</th></tr></thead><tbody><tr><td class="c"><span class="cb"></span></td><td class="lgc"><span class="lg brk"><svg class="bimg" width="16" height="16" viewBox="0 0 16 16"><path d="M1.500.500h9l4 4v11h-13z" fill="#fff" stroke="#cfcfcf"/><path d="M2.500 1.500h7.500l3.500 3.500v4h-11z" fill="#c3d2f3"/><path d="M2.500 12.500c1-4 5-7 10-7.500-1 4-5 7.500-10 7.500z" fill="#54a32c"/><path d="M10.500.500v4h4" fill="#e8e8e8" stroke="#cfcfcf"/></svg></span></td><td class="nm">北京布袋哥科技有限公司-宋娟<br>伟【布袋哥】</td><td>小吃货</td><td><span class="gbtn">点击查看职位</span></td><td>禁用</td><td class="act"><svg class="ic" width="16" height="16" viewBox="0 0 16 16" style="fill:#428bca;"><g transform="translate(5.600 5.400) rotate(45)"><rect x="-2.600" y="-4.300" width="5.200" height="8.600"/><rect x="-3.300" y="-5.700" width="6.600" height="1.700" rx=".5"/><rect x="-3.300" y="4" width="6.600" height="1.700" rx=".5"/><rect x="2.600" y="-1.300" width="10.800" height="2.600" rx="1"/></g></svg></td></tr><tr><td class="c"><span class="cb"></span></td><td class="lgc"><span class="lg brk"><svg class="bimg" width="16" height="16" viewBox="0 0 16 16"><path d="M1.500.500h9l4 4v11h-13z" fill="#fff" stroke="#cfcfcf"/><path d="M2.500 1.500h7.500l3.500 3.500v4h-11z" fill="#c3d2f3"/><path d="M2.500 12.500c1-4 5-7 10-7.500-1 4-5 7.500-10 7.500z" fill="#54a32c"/><path d="M10.500.500v4h4" fill="#e8e8e8" stroke="#cfcfcf"/></svg></span></td><td class="nm">大家好【大家好】</td><td>嗯嗯嗯</td><td><span class="gbtn">点击查看职位</span></td><td>禁用</td><td class="act"><svg class="ic" width="16" height="16" viewBox="0 0 16 16" style="fill:#428bca;"><g transform="translate(5.600 5.400) rotate(45)"><rect x="-2.600" y="-4.300" width="5.200" height="8.600"/><rect x="-3.300" y="-5.700" width="6.600" height="1.700" rx=".5"/><rect x="-3.300" y="4" width="6.600" height="1.700" rx=".5"/><rect x="2.600" y="-1.300" width="10.800" height="2.600" rx="1"/></g></svg></td></tr><tr><td class="c"><span class="cb"></span></td><td class="lgc"><span class="lg brk"><svg class="bimg" width="16" height="16" viewBox="0 0 16 16"><path d="M1.500.500h9l4 4v11h-13z" fill="#fff" stroke="#cfcfcf"/><path d="M2.500 1.500h7.500l3.500 3.500v4h-11z" fill="#c3d2f3"/><path d="M2.500 12.500c1-4 5-7 10-7.500-1 4-5 7.500-10 7.500z" fill="#54a32c"/><path d="M10.500.500v4h4" fill="#e8e8e8" stroke="#cfcfcf"/></svg></span></td><td class="nm">北京小小香滨科技有限公司<br>【小小香滨】</td><td>网络天下资讯</td><td><span class="gbtn">点击查看职位</span></td><td>禁用</td><td class="act"><svg class="ic" width="16" height="16" viewBox="0 0 16 16" style="fill:#428bca;"><g transform="translate(5.600 5.400) rotate(45)"><rect x="-2.600" y="-4.300" width="5.200" height="8.600"/><rect x="-3.300" y="-5.700" width="6.600" height="1.700" rx=".5"/><rect x="-3.300" y="4" width="6.600" height="1.700" rx=".5"/><rect x="2.600" y="-1.300" width="10.800" height="2.600" rx="1"/></g></svg></td></tr><tr><td class="c"><span class="cb"></span></td><td class="lgc"><span class="lg bank"><svg class="ic" width="36" height="36" viewBox="0 0 16 16" style="fill:#fff;"><path d="M8 1 1 4.500v1.200h14V4.500zM2.500 6.700v5.500h1.800V6.700zM5.700 6.700v5.500h1.800V6.700zM8.500 6.700v5.500h1.800V6.700zM11.700 6.700v5.500h1.800V6.700zM1.500 13v1h13v-1zM.8 14.500V15.600h14.400v-1.100z"/></svg></span></td><td class="nm">缘缘图文网络工作室【】</td><td>哈哈哈 哈哈哈</td><td><span class="gbtn">点击查看职位</span></td><td>未认证</td><td class="act"><svg class="ic" width="16" height="16" viewBox="0 0 16 16" style="fill:#dd5a43;"><g transform="translate(5.600 5.400) rotate(45)"><rect x="-2.600" y="-4.300" width="5.200" height="8.600"/><rect x="-3.300" y="-5.700" width="6.600" height="1.700" rx=".5"/><rect x="-3.300" y="4" width="6.600" height="1.700" rx=".5"/><rect x="2.600" y="-1.300" width="10.800" height="2.600" rx="1"/></g></svg></td></tr><tr><td class="c"><span class="cb"></span></td><td class="lgc"><span class="lg w"><svg width="47" height="46" viewBox="0 0 47 46"><circle cx="24" cy="16.500" r="15.500" fill="#f1d91c"/><circle cx="24" cy="16.500" r="12" fill="none" stroke="#fff" stroke-width="1.500"/><text x="24" y="22.500" font-size="16" text-anchor="middle" fill="#fff" font-family="Liberation Sans, Noto Sans CJK SC, sans-serif" font-weight="bold">鲜</text><text x="24" y="44" font-size="10.500" letter-spacing="3" text-anchor="middle" fill="#ecd21e" font-weight="bold" font-family="Liberation Sans, Noto Sans CJK SC, sans-serif">一米鲜</text></svg></span></td><td class="nm">聚鲜（北京）科技有限公司<br>【聚鲜科技】</td><td>我们有屁爆了的大叔！和她爆了的小鲜肉！</td><td><span class="gbtn">点击查看职位</span></td><td>未认证</td><td class="act"><svg class="ic" width="16" height="16" viewBox="0 0 16 16" style="fill:#dd5a43;"><g transform="translate(5.600 5.400) rotate(45)"><rect x="-2.600" y="-4.300" width="5.200" height="8.600"/><rect x="-3.300" y="-5.700" width="6.600" height="1.700" rx=".5"/><rect x="-3.300" y="4" width="6.600" height="1.700" rx=".5"/><rect x="2.600" y="-1.300" width="10.800" height="2.600" rx="1"/></g></svg></td></tr><tr><td class="c"><span class="cb"></span></td><td class="lgc"><span class="lg w"><svg width="47" height="46" viewBox="0 0 47 46"><text x="23.500" y="26" font-size="14" text-anchor="middle" fill="#4269b3" font-weight="bold" font-family="Liberation Sans, Noto Sans CJK SC, sans-serif">咸鱼控</text></svg></span></td><td class="nm">广东闪云互联网科技有限公司<br>【闪云科技】</td><td>闪云科技专注于电信行业流量经营的虚拟运营商，团队超过10年以上互联网、通信行业经验。</td><td><span class="gbtn">点击查看职位</span></td><td>未认证</td><td class="act"><svg class="ic" width="16" height="16" viewBox="0 0 16 16" style="fill:#dd5a43;"><g transform="translate(5.600 5.400) rotate(45)"><rect x="-2.600" y="-4.300" width="5.200" height="8.600"/><rect x="-3.300" y="-5.700" width="6.600" height="1.700" rx=".5"/><rect x="-3.300" y="4" width="6.600" height="1.700" rx=".5"/><rect x="2.600" y="-1.300" width="10.800" height="2.600" rx="1"/></g></svg></td></tr><tr><td class="c"><span class="cb"></span></td><td class="lgc"><span class="lg w"><svg width="47" height="46" viewBox="0 0 47 46"><path d="M1.500 27c2-7 8-11 13-11 4 0 7 2 9 5l-2.500 1.500c-1.500-2.500-4-3.500-6.500-3.500-3 0-6 1.500-8 4.500 2-1 4-1 5 .5 1.500 2 .5 4-2 5h12v2.500H2c-1-.5-1.500-2-.5-4.500z" fill="#c7176e"/><text x="34" y="29" font-size="9.500" text-anchor="middle" fill="#5a2a3a" font-weight="bold" font-family="Liberation Sans, Noto Sans CJK SC, sans-serif">美乐乐</text><rect x="22" y="31" width="24" height="2" fill="#c7176e"/></svg></span></td><td class="nm">深圳缘顾家居设计有限公司<br>【美乐乐家居】</td><td>身份高，福利好，发展快，美女多，帅哥好。</td><td><span class="gbtn">点击查看职位</span></td><td>未认证</td><td class="act"><svg class="ic" width="16" height="16" viewBox="0 0 16 16" style="fill:#dd5a43;"><g transform="translate(5.600 5.400) rotate(45)"><rect x="-2.600" y="-4.300" width="5.200" height="8.600"/><rect x="-3.300" y="-5.700" width="6.600" height="1.700" rx=".5"/><rect x="-3.300" y="4" width="6.600" height="1.700" rx=".5"/><rect x="2.600" y="-1.300" width="10.800" height="2.600" rx="1"/></g></svg></td></tr><tr><td></td><td></td><td></td><td></td><td></td><td></td><td></td></tr></tbody></table></div></div></div></div></body></html>
